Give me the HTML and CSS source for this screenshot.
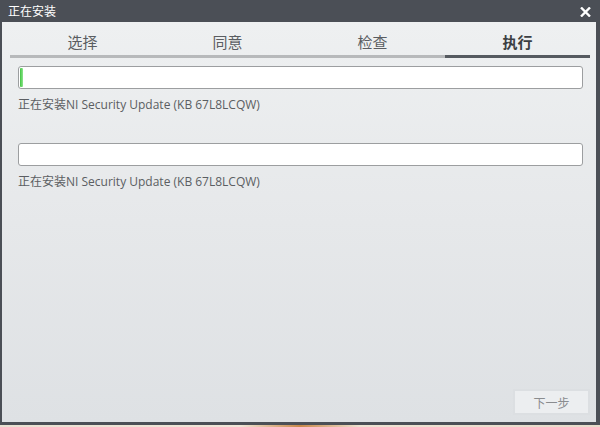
FILE: index.html
```html
<!DOCTYPE html>
<html lang="zh-CN">
<head>
<meta charset="utf-8">
<title>正在安装</title>
<link rel="stylesheet" href="styles.css">
</head>
<body>
<div class="window">
  <div class="titlebar">
    <span class="title">正在安装</span>
    <svg class="close" width="11" height="10" viewBox="0 0 11 10" aria-label="关闭">
      <path d="M1 0.5 L10 9.5 M10 0.5 L1 9.5" stroke="#ffffff" stroke-width="2.4" stroke-linecap="butt" fill="none"/>
    </svg>
  </div>
  <div class="content">
    <div class="tabs">
      <div class="tab">选择</div>
      <div class="tab">同意</div>
      <div class="tab">检查</div>
      <div class="tab active">执行</div>
    </div>
    <div class="progress-group">
      <div class="bar"><div class="fill" style="width:3px"></div></div>
      <div class="status">正在安装NI Security Update (KB 67L8LCQW)</div>
    </div>
    <div class="progress-group second">
      <div class="bar"><div class="fill" style="width:0"></div></div>
      <div class="status">正在安装NI Security Update (KB 67L8LCQW)</div>
    </div>
    <div class="footer">
      <button class="next">下一步</button>
    </div>
  </div>
</div>
<div class="desktop"></div>
</body>
</html>
```

FILE: styles.css
```css
html, body {
  margin: 0;
  padding: 0;
  width: 600px;
  height: 427px;
  overflow: hidden;
  background: #c89a6a;
  font-family: "Open Sans", "Noto Sans CJK SC", sans-serif;
}

.window {
  height: 425px;
  display: flex;
  flex-direction: column;
  background: #4b4f56;
  border-left: 2px solid #4b4f56;
  border-right: 4px solid #4b4f56;
  border-bottom: 3px solid #4b4f56;
  box-sizing: border-box;
}

.titlebar {
  height: 22px;
  flex: none;
  display: flex;
  align-items: center;
  justify-content: space-between;
  padding: 0 5px 0 6px;
  color: #ffffff;
}

.title {
  font-family: "Noto Sans CJK SC", sans-serif;
  font-size: 12px;
  line-height: 22px;
}

.close {
  display: block;
  margin-top: 1px;
}

.content {
  flex: 1;
  display: flex;
  flex-direction: column;
  background: linear-gradient(to bottom, #eef0f1 0%, #e6e8ea 50%, #dee1e4 100%);
  padding: 0 6px 7px 8px;
  box-sizing: border-box;
}

.tabs {
  display: grid;
  grid-template-columns: repeat(4, 1fr);
}

.tab {
  font-family: "Noto Sans CJK SC", sans-serif;
  font-size: 15px;
  line-height: 20px;
  color: #5a5d61;
  text-align: center;
  padding-top: 10px;
  padding-bottom: 3px;
  border-bottom: 3px solid #b7b9bb;
}

.tab.active {
  color: #3c3f43;
  font-weight: bold;
  border-bottom-color: #555a60;
}

.progress-group {
  padding: 8px 7px 0 8px;
}

.progress-group.second {
  padding-top: 30px;
}

.bar {
  height: 23px;
  box-sizing: border-box;
  border: 1px solid #9c9ea0;
  border-radius: 3px;
  background: #ffffff;
  padding: 1px;
  display: flex;
}

.fill {
  height: 100%;
  background: linear-gradient(to right, #3fc43f, #8fe58f);
  border-radius: 1px;
}

.status {
  margin-top: 8px;
  font-size: 12px;
  line-height: 16px;
  color: #5b5e62;
}

.footer {
  margin-top: auto;
  display: flex;
  justify-content: flex-end;
}

.next {
  width: 77px;
  height: 26px;
  box-sizing: border-box;
  background: #eceef0;
  border: 2px solid #dcdfe2;
  border-radius: 0;
  color: #8a8c8f;
  font-family: "Noto Sans CJK SC", sans-serif;
  font-size: 12px;
  padding: 0;
}

.desktop {
  height: 2px;
  background: linear-gradient(to right, #e9e1d2, #f0e6d8 40%, #c8884a 50%, #eee3d3 60%, #e7dccb);
}
```
